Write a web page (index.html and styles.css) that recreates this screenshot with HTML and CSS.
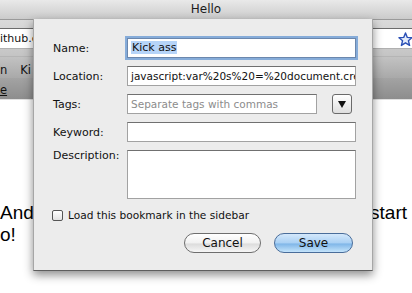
FILE: index.html
```html
<!DOCTYPE html>
<html>
<head>
    <title>Hello</title>
    <meta name="viewport" content="width=device-width, initial-scale=1">
    <link rel="stylesheet" href="styles.css">
</head>
<body>
    <div class="window">
        <div class="titlebar">Hello</div>

        <div class="urlbar">
            <div class="url-field">
                <span class="url-text">github.com/</span>
                <svg class="star" width="15" height="15" viewBox="0 0 15 15">
                    <polygon points="7.5,1 9.3,5.4 14,5.7 10.4,8.7 11.6,13.4 7.5,10.8 3.4,13.4 4.6,8.7 1,5.7 5.7,5.4"
                             fill="#e4ecfb" stroke="#2a4fb5" stroke-width="1.4" stroke-linejoin="round"/>
                </svg>
            </div>
        </div>

        <div class="bookmarks">
            <span>n</span>
            <span>Ki</span>
        </div>

        <div class="tabs">
            <span class="tab">e</span>
        </div>

        <div class="content">
            <p class="line line-split"><span>And</span><span>start</span></p>
            <p class="line">o!</p>
        </div>

        <!-- bookmark sheet, drops from the title bar -->
        <div class="sheet">
            <div class="fields">
                <label>Name:</label>
                <div class="field field-focus"><span class="selected">Kick ass</span></div>

                <label>Location:</label>
                <div class="field">javascript:var%20s%20=%20document.cre</div>

                <label>Tags:</label>
                <div class="tags-cell">
                    <div class="field placeholder">Separate tags with commas</div>
                    <div class="drop-btn"><span class="arrow"></span></div>
                </div>

                <label>Keyword:</label>
                <div class="field"></div>

                <label class="label-top">Description:</label>
                <div class="field textarea"></div>
            </div>

            <div class="check-row">
                <span class="checkbox"></span>
                <span>Load this bookmark in the sidebar</span>
            </div>

            <div class="actions">
                <button class="btn btn-cancel">Cancel</button>
                <button class="btn btn-save">Save</button>
            </div>
        </div>
    </div>
</body>
</html>
```

FILE: styles.css
```css
* {
    margin: 0;
    padding: 0;
    box-sizing: border-box;
}

body {
    font-family: 'DejaVu Sans', Verdana, sans-serif;
    font-size: 11px;
    color: #111;
    background: white;
    overflow: hidden;
}

.window {
    position: relative;
    width: 412px;
    height: 293px;
    overflow: hidden;
}

.titlebar {
    height: 20px;
    line-height: 19px;
    text-align: center;
    font-size: 12px;
    color: #1c1c1c;
    background: linear-gradient(#e9e9e9, #cbcbcb);
    border-bottom: 1px solid #9a9a9a;
}

.urlbar {
    height: 36px;
    padding-top: 8px;
    background: linear-gradient(#dadada, #c4c4c4);
}

.url-field {
    display: flex;
    align-items: center;
    justify-content: space-between;
    height: 21px;
    background: white;
    border-top: 1px solid #6c6c6c;
    border-bottom: 1px solid #b0b0b0;
}

.url-text {
    margin-left: -7px;
    font-size: 11px;
}

.star {
    margin-right: -1px;
    margin-top: 1px;
}

.bookmarks {
    display: flex;
    gap: 13px;
    height: 22px;
    padding-top: 6px;
    font-size: 11.5px;
    color: #111;
    background: linear-gradient(#c2c2c2, #a9a9a9);
    border-top: 1px solid #b5b5b5;
}

.tabs {
    height: 22px;
    padding-top: 5px;
    background: linear-gradient(#a3a3a3, #8d8d8d);
    border-bottom: 1px solid #e0e0e0;
}

.tab {
    font-size: 11.5px;
    text-decoration: underline;
}

.content {
    padding-top: 102px;
    font-family: 'Liberation Sans', Arial, sans-serif;
    font-size: 19px;
    color: #000;
}

.line {
    line-height: 22px;
}

.line-split {
    display: flex;
    justify-content: space-between;
    padding-right: 5px;
}

/* sheet */

.sheet {
    position: absolute;
    left: 33px;
    top: 19px;
    width: 340px;
    padding: 19px 16px 17px 19px;
    background: #ececec;
    border: 1px solid #a6a6a6;
    border-top: none;
    border-bottom-color: #5e5e5e;
    box-shadow: 0 4px 9px rgba(0,0,0,0.45);
}

.fields {
    display: grid;
    grid-template-columns: 74px 1fr;
    row-gap: 8px;
}

.fields label {
    align-self: center;
    color: #111;
}

.fields .label-top {
    align-self: start;
    margin-top: -1px;
}

.field {
    height: 20px;
    line-height: 18px;
    padding: 0 3px;
    font-size: 10.5px;
    background: white;
    border: 1px solid #a2a2a2;
    border-top-color: #707070;
    white-space: nowrap;
    overflow: hidden;
}

.field-focus {
    font-size: 11px;
    box-shadow: 0 0 0 2px #86acd9;
    border-color: #6b87ad;
}

.selected {
    background: #b6d4f8;
    padding: 0 1px;
}

.placeholder {
    color: #8c8c8c;
    flex: 1;
}

.tags-cell {
    display: flex;
    align-items: center;
}

.drop-btn {
    display: flex;
    align-items: center;
    justify-content: center;
    width: 20px;
    height: 20px;
    margin-left: 15px;
    margin-right: 4px;
    border: 1px solid #6a6a6a;
    border-radius: 3px;
    background: linear-gradient(#ffffff, #dedede);
}

.arrow {
    width: 0;
    height: 0;
    margin-top: 1px;
    border-left: 4px solid transparent;
    border-right: 4px solid transparent;
    border-top: 7px solid #111;
}

.textarea {
    height: 49px;
}

.check-row {
    display: flex;
    align-items: center;
    gap: 5px;
    margin-top: 10px;
    margin-left: -1px;
    height: 12px;
    font-size: 10.6px;
}

.checkbox {
    width: 11px;
    height: 11px;
    border: 1px solid #555;
    border-radius: 2px;
    background: linear-gradient(#ffffff, #e2e2e2);
}

.actions {
    display: flex;
    justify-content: flex-end;
    gap: 13px;
    margin-top: 12px;
    margin-right: 3px;
}

.btn {
    height: 20px;
    border-radius: 10px;
    border: 1px solid #6e6e6e;
    font-family: 'DejaVu Sans', Verdana, sans-serif;
    font-size: 12px;
    color: #111;
    cursor: pointer;
}

.btn-cancel {
    width: 77px;
    background: linear-gradient(#ffffff 0%, #f1f1f1 50%, #dcdcdc 55%, #f6f6f6 100%);
}

.btn-save {
    width: 79px;
    border-color: #4a6d9a;
    background: linear-gradient(#d4e8fb 0%, #a9d0f4 50%, #7fb6e8 55%, #c4e4fb 100%);
}
```
